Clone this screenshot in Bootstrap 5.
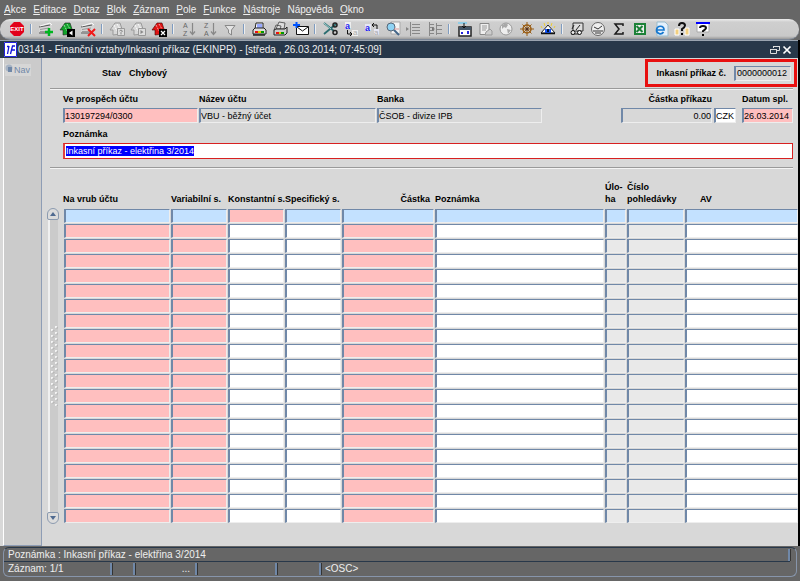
<!DOCTYPE html>
<html lang="cs">
<head>
<meta charset="utf-8">
<meta name="viewport" content="width=device-width, initial-scale=1">
<title>03141 - Finanční vztahy/Inkasní příkaz</title>
<link rel="stylesheet" href="https://cdn.jsdelivr.net/npm/bootstrap@5.3.0/dist/css/bootstrap.min.css">
<style>
body{font:10px/12px "Liberation Sans",Arial,sans-serif;color:#000;background:#666}
.app-menu{height:19px;padding:4px 4px 0;gap:7px}
.app-menu a{color:#f0f0f0;text-decoration:none;white-space:nowrap}
.tools{height:21px;padding:0 6px;margin-right:1px;background:linear-gradient(#ececec,#cfcfcf 3px,#c9c9c9 17px,#999);border-bottom:1px solid #7d8898;border-radius:10px}
.tools button{width:21px;height:20px;padding:0;border:0;background:none;display:flex;align-items:center;justify-content:center}
.tools svg{width:16px;height:16px;display:block}
.split{width:2px;height:10px;margin:0 3px;background:#7f9cc0;border-right:1px solid #eee}
.win{border-right:2px solid #000;background:#d8d8d8}
.win-title{height:18px;background:#28384a;color:#eee;border-top:1px solid #9aa4b0}
.win-title button{border:0;background:none;padding:0;width:12px;height:12px}
.win-title svg{display:block}
.side{width:39px;margin-left:3px;background:#cbcbcb;border-left:1px solid #fff;border-right:1px solid #8e9db5;border-bottom:1px solid #8e9db5;padding:6px 1px}
.side button{border:0;background:#d6d6d6;color:#7088a8;padding:0 1px 0 0;font-size:9px;line-height:12px;white-space:nowrap}
.side svg{display:block}
.pane{min-width:0;padding-left:8px}
.bold,.pane label,.grid-t th{font-size:9px;font-weight:bold;line-height:12px;white-space:nowrap}
.num-box{border:3px solid #e81010;padding:4px 3px 4px 8px;height:28px;gap:8px;margin:1px 1px 1px 0}
.rule{height:2px;background:#9a9a9a;border-bottom:1px solid #f4f4f4;margin-right:5px}
.fld{font-size:9px;line-height:12px;height:15px;width:100%;padding:0 1px;border:1px solid;border-left-width:2px;border-color:#7088a8 #eee #eee #7088a8;background:#d8d8d8;border-radius:0;outline:0;color:#000;display:block}
.pink{background:#ffbfbf}.blue{background:#c3e1ff}.pale{background:#e9e9e9}.white{background:#fff}
.fields{padding:3px 5px 0 13px;gap:1px}
.fields label,.memo label{display:block;margin-bottom:3px}
.fields .fld{padding:0}
.w-acc{width:135px}.w-name{width:177px}.w-bank{width:165px}.w-sum{width:91px}.w-cur{width:22px;margin:0 5px 0 1px}.w-date{width:51px}.w-num{width:57px}
.memo{padding:5px 5px 0 13px}
.memo-in{height:16px;border:1px solid #d82020;border-left:2px solid #e04040;background:#fff;padding:0 1px;display:block;width:100%;font-size:9px;line-height:12px;outline:0}
.memo-in::selection{background:#00f;color:#fff}
.scroller{width:13px;padding-top:39px;margin-right:3px;margin-left:-3px}
.scroller button{width:12px;height:12px;padding:0;border:1px solid #8c9bb0;background:#dcdcdc;display:block}
.scroller svg{display:block;margin:auto}
.s-up{border-radius:6px 6px 2px 2px}.s-dn{border-radius:2px 2px 6px 6px}
.track{width:10px;border-left:2px solid #f0f0f0;margin-left:1px;background:#cbcbcb}
.grid-wrap{padding-top:12px;min-width:0}
.grid-t{table-layout:fixed;width:100%;border-collapse:collapse}
.grid-t th{padding:0 0 4px 1px;height:28px;vertical-align:bottom}
.grid-t th:first-child{padding-left:0}
.grid-t td{padding:0 0 1px 1px;height:15px;vertical-align:top}
.grid-t .fld{height:14px}
.status{margin:1px 3px 4px;border:1px solid #8795ab;border-top-color:#28384a;border-radius:6px;color:#eee}
.status .line{height:14px;padding-left:4px;white-space:nowrap}
.status .line:first-child{border-bottom:1px solid #28384a;margin-right:6px}
.bar{border-right:2px solid #7088a8;box-shadow:1px 0 #333;height:12px}
.s1{width:104px}.s2{width:23px}.s3{width:62px;padding-right:5px}.s4{width:80px}.s5{width:44px}
</style>
<script src="https://cdn.jsdelivr.net/npm/bootstrap@5.3.0/dist/js/bootstrap.bundle.min.js"></script>
</head>
<body class="d-flex flex-column min-vh-100">
<nav class="app-menu d-flex" aria-label="Hlavní menu">
<a href="#"><u>A</u>kce</a><a href="#"><u>E</u>ditace</a><a href="#"><u>D</u>otaz</a><a href="#"><u>B</u>lok</a><a href="#"><u>Z</u>áznam</a><a href="#"><u>P</u>ole</a><a href="#"><u>F</u>unkce</a><a href="#"><u>N</u>ástroje</a><a href="#">Náp<u>o</u>věda</a><a href="#"><u>O</u>kno</a>
</nav>
<svg width="0" height="0" class="position-absolute" aria-hidden="true"><defs>
<g id="doc"><path d="M1 5l11-3 2 2v7l-11 2H1z" fill="#d4d4d4"/><path d="M1 6l11-2M1 12h9" stroke="#555"/><path d="M2 8.500l9-1.500M2 10.500h8" stroke="#999"/><path d="M2 5l10-3 2 2" stroke="#f8f8f8" fill="none"/></g>
<g id="house"><path d="M1 9l5-7h5l2 6v5l-9 1V9z"/><path d="M5 4l3 6M8 3l3 5" stroke="#fff" fill="none" stroke-dasharray="2 1"/></g>
<g id="sort"><path d="M12.500 2v11M10 10.500l2.500 3 2.500-3" stroke="#888" fill="none" stroke-width="1.200"/></g>
</defs></svg>
<div class="tools d-flex align-items-center" role="toolbar" aria-label="Nástroje">
<button aria-label="Konec"><svg viewBox="0 0 16 16"><path d="M5 1h6l4 4v6l-4 4H5l-4-4V5z" fill="#e2001a"/><text x="8" y="10" font-size="6" font-weight="bold" fill="#fff" text-anchor="middle">EXIT</text></svg></button><i class="split"></i>
<button aria-label="Nový záznam"><svg viewBox="0 0 16 16"><use href="#doc"/><path d="M11 7v8M7 11h8" stroke="#00b520" stroke-width="2.500"/></svg></button>
<button aria-label="Předchozí blok"><svg viewBox="0 0 16 16"><use href="#house" fill="#11a32a" stroke="#222" stroke-width=".6"/><path d="M8 8h8v8H8z"/><path d="M13.500 9.500v5L10 12z" fill="#fff"/></svg></button>
<button aria-label="Smazat záznam"><svg viewBox="0 0 16 16"><use href="#doc"/><path d="M8 8l7 7M15 8l-7 7" stroke="#f01818" stroke-width="2"/></svg></button><i class="split"></i>
<button aria-label="Dotaz"><svg viewBox="0 0 16 16"><use href="#house" fill="#d8d8d8" stroke="#999"/><path d="M8.500 7.500h7v7h-7z" fill="#ddd" stroke="#999"/><path d="M10.500 10q1.500-2 3 0l-1.500 1.500v2" fill="none" stroke="#888"/></svg></button>
<button aria-label="Proveď dotaz"><svg viewBox="0 0 16 16"><use href="#house" fill="#d8d8d8" stroke="#999"/><path d="M8.500 7.500h7v7h-7z" fill="#ddd" stroke="#999"/><path d="M10.500 9v4l3-2z" fill="#888"/></svg></button>
<button aria-label="Zruš dotaz"><svg viewBox="0 0 16 16"><use href="#house" fill="#df1414" stroke="#400" stroke-width=".6"/><path d="M8 8h8v8H8z"/><path d="M10 10l4 4M14 10l-4 4" stroke="#fff" stroke-width="1.200"/></svg></button><i class="split"></i>
<button aria-label="Řadit vzestupně"><svg viewBox="0 0 16 16"><text x="3" y="7" font-size="7" fill="#666">A</text><text x="3" y="15" font-size="7" fill="#666">Z</text><use href="#sort"/></svg></button>
<button aria-label="Řadit sestupně"><svg viewBox="0 0 16 16"><text x="3" y="7" font-size="7" fill="#666">Z</text><text x="3" y="15" font-size="7" fill="#666">A</text><use href="#sort"/></svg></button>
<button aria-label="Filtr"><svg viewBox="0 0 16 16"><path d="M3 4.500h10L9.500 9v5l-3-2V9z" fill="#e4e4e4" stroke="#888"/></svg></button><i class="split"></i>
<button aria-label="Tisk"><svg viewBox="0 0 16 16"><path d="M5 2h7v6H4z" fill="#fff" stroke="#222"/><path d="M6 4h5M6 6h5" stroke="#35f"/><path d="M2 9l2-2h9l2 2v4H2z" fill="#ddd" stroke="#222"/><path d="M2 14h12" stroke="#222" stroke-width="1.500"/><path d="M4 11h3" stroke="#e11" stroke-width="2"/><path d="M7 11h3" stroke="#dc0" stroke-width="2"/><path d="M10 11h3" stroke="#090" stroke-width="2"/></svg></button>
<button aria-label="Tisk sestav"><svg viewBox="0 0 16 16"><path d="M7 1l6 1-1 6H4zM4 4l5 1-1 4H2z" fill="#ddd" stroke="#444" stroke-width=".8"/><path d="M2 9l2-1h9l2-2v6l-2 2H2z" fill="#ccc" stroke="#222"/><path d="M4 12h3" stroke="#e11" stroke-width="2"/><path d="M7 12h2" stroke="#dc0" stroke-width="2"/><path d="M9 12h3" stroke="#090" stroke-width="2"/></svg></button>
<button aria-label="Nová zpráva"><svg viewBox="0 0 16 16"><path d="M3.500 5.500h12v8h-12z" fill="#fff" stroke="#111"/><path d="M4 6l5.500 4L15 6" fill="none" stroke="#111"/><path d="M3.500 1v6M0 4h7" stroke="#05f" stroke-width="2"/></svg></button><i class="split"></i>
<button aria-label="Vyjmout"><svg viewBox="0 0 16 16"><path d="M2 2l10 8M2 13L14 3" stroke="#2b6d70" stroke-width="1.800"/><path d="M2 2l7 6" stroke="#dff" stroke-width=".7"/><circle cx="13" cy="4" r="2" fill="none" stroke="#222" stroke-width="1.500"/><circle cx="13" cy="11.500" r="2" fill="none" stroke="#222" stroke-width="1.500"/></svg></button>
<button aria-label="Kopírovat"><svg viewBox="0 0 16 16"><path d="M2 1h6v7H2zM9 9h6v6H9z" fill="#eee"/><text x="2" y="8" font-size="9" font-weight="bold" fill="#22e">a</text><text x="10" y="14" font-size="8" fill="#aaa">a</text><path d="M4.500 9v4H9M7 11l2 2-2 2" fill="none" stroke="#111"/></svg></button>
<button aria-label="Vložit"><svg viewBox="0 0 16 16"><path d="M1 3h6v7H1zM10 8h5v6h-5z" fill="#e6e6f4"/><text x="1" y="10" font-size="9" font-weight="bold" fill="#22e">a</text><text x="10" y="14" font-size="8" fill="#aaa">a</text><path d="M8 4h5v4M10 2L8 4l2 2" fill="none" stroke="#111"/></svg></button>
<button aria-label="Hledat"><svg viewBox="0 0 16 16"><path d="M6 1h9v12H6z" fill="#f4f4f4" stroke="#aaa"/><circle cx="6" cy="6" r="4" fill="#8fd3f4" stroke="#567"/><path d="M9 9l5 5" stroke="#468" stroke-width="2"/><path d="M9 8h5" stroke="#d99"/></svg></button>
<button aria-label="Odsadit"><svg viewBox="0 0 16 16"><path d="M4.500 1v14M6 3.500h8M6 6.500h8M6 9.500h8M6 12.500h8" stroke="#888"/><path d="M0 6l3 2-3 2z" fill="#888"/></svg></button>
<button aria-label="Strom"><svg viewBox="0 0 16 16"><path d="M2.500 1v14M2 3.500h5M2 6.500h5M2 9.500h5M2 12.500h5M9.500 2v12M10 4.500h5M10 8.500h5M10 12.500h5" stroke="#888"/><path d="M5 6l3 2-3 2z" fill="#777"/></svg></button><i class="split"></i>
<button aria-label="Kalendář"><svg viewBox="0 0 16 16"><path d="M2 2h9" stroke="#5cf"/><path d="M3 6h12v9H3z" fill="#fff" stroke="#222" stroke-width="1.500"/><path d="M3 6h12v3H3z" fill="#456"/><path d="M8 2v5M6 5l2 2 2-2" stroke="#111" fill="none"/><path d="M5 11h2v2H5zM11 10h2v3h-2z" fill="#22d"/></svg></button>
<button aria-label="Dokument"><svg viewBox="0 0 16 16"><path d="M3 2.500h9v11H3z" fill="#eee" stroke="#888"/><path d="M5 5h5M5 7h5M5 9h4M9 11l4-3 2 2v4H8z" stroke="#999" fill="#ccc"/></svg></button>
<button aria-label="Web"><svg viewBox="0 0 16 16"><circle cx="8" cy="8" r="6" fill="#eee" stroke="#999"/><path d="M4 4l4-2 2 2-2 3-2-1-2 2zM9 8l4 1-3 4z" fill="#a8a8a8"/></svg></button>
<button aria-label="Navigace"><svg viewBox="0 0 16 16"><g fill="none" stroke="#995c12"><circle cx="8" cy="8" r="4" stroke-width="1.500"/><path d="M8 1v14M1 8h14M3.500 3.500l9 9M12.500 3.500l-9 9" stroke-width="1"/></g><circle cx="8" cy="8" r="1.500" fill="#532"/></svg></button>
<button aria-label="Zobrazit"><svg viewBox="0 0 16 16"><path d="M2 7L1 5M5 5L4 2M8 3V1M11 5l1-3M14 7l1-2" stroke="#ec3"/><path d="M8 4l7 8H1z" fill="#fff" stroke="#222"/><path d="M5 8h6v4H5z" fill="#15f"/><path d="M1 12.500h14" stroke="#111" stroke-width="1.500"/><path d="M7 8h2v3H7z" fill="#013"/></svg></button><i class="split"></i>
<button aria-label="Doprava"><svg viewBox="0 0 16 16"><path d="M4 2h10v8H4z" fill="#ddd" stroke="#333"/><path d="M3 8l2-4M7 9l4-5M2 13h9" stroke="#222"/><circle cx="4" cy="11.500" r="2" fill="#eee" stroke="#111"/><circle cx="10.500" cy="11.500" r="2" fill="#eee" stroke="#111"/></svg></button>
<button aria-label="Čas"><svg viewBox="0 0 16 16"><circle cx="8" cy="8" r="6.500" fill="#eee" stroke="#666"/><path d="M4 6l4 2 4-3M3 10h10M5 12h6" stroke="#333" fill="none"/></svg></button>
<button aria-label="Součet"><svg viewBox="0 0 16 16"><path d="M12 5V3H4l4 5-4 5h8v-2" fill="none" stroke="#1b1b1b" stroke-width="1.500"/></svg></button>
<button aria-label="Excel"><svg viewBox="0 0 16 16"><path d="M2 2h12v12H2z" fill="#1c8138"/><path d="M4 4h8v8H4z" fill="#eee"/><path d="M4.500 5l6 6M10.500 5l-6 6" stroke="#1c8138" stroke-width="2"/></svg></button>
<button aria-label="Internet"><svg viewBox="0 0 16 16"><path d="M4 1h8l3 3v11H4z" fill="#e4f0fb" stroke="#9bc"/><path d="M3 9h8c0-5-7-5-7.500 0 0 4 5 5 7 2" fill="none" stroke="#1678cf" stroke-width="1.700"/></svg></button>
<button aria-label="Nápověda k poli"><svg viewBox="0 0 16 16"><path d="M1 8h4v6H1zM11 7h4v7h-4z" fill="#f2cf80" stroke="#fff"/><path d="M5 5q0-3 3-3t3 2.500Q11 6 8 8v2" fill="none" stroke="#111" stroke-width="2"/><path d="M7 12h2v2H7z"/></svg></button>
<button aria-label="Nápověda"><svg viewBox="0 0 16 16"><path d="M2 2h12v9H2z" fill="#fff" stroke="#aaa"/><path d="M1 2h14" stroke="#00f" stroke-width="2"/><path d="M5 7q0-2 3-2t3 2q0 1-3 3v1" fill="none" stroke="#111" stroke-width="2"/><path d="M7 13h2v2H7z"/></svg></button>
</div>
<main class="win d-flex flex-column flex-grow-1">
<header class="win-title d-flex align-items-center">
<svg class="ms-1 flex-shrink-0" width="14" height="15" viewBox="0 0 14 15" aria-hidden="true"><path d="M0 0h13v15H0z" fill="#fff"/><path d="M.5.500h12v14H.5z" fill="none" stroke="#22d"/><path d="M3 4.500h2M5 4L3.500 12M6.500 12l2-8H11M8 8h3" stroke="#11d" stroke-width="1.300" fill="none"/></svg>
<span class="text-nowrap">03141 - Finanční vztahy/Inkasní příkaz (EKINPR) - [středa , 26.03.2014; 07:45:09]</span>
<button class="ms-auto" aria-label="Obnovit"><svg width="10" height="10" viewBox="0 0 10 10" fill="none" stroke="#ddd"><path d="M3.500 3V1.500h6v4H7M3 1.500h7"/><path d="M.5 4.500h6v4h-6zM0 4.500h7"/></svg></button>
<button class="me-1" aria-label="Zavřít"><svg width="10" height="10" viewBox="0 0 10 10"><path d="M1.500 1.500l7 7M8.500 1.500l-7 7" stroke="#fff" stroke-width="1.700"/></svg></button>
</header>
<div class="d-flex flex-grow-1">
<aside class="side flex-shrink-0"><button class="d-flex"><svg width="9" height="9" viewBox="0 0 9 9" aria-hidden="true"><circle cx="4" cy="4" r="3.500" fill="#a8b4c4"/><path d="M3 3h4v5H3z" fill="#7088a8"/></svg><span>Nav</span></button></aside>
<section class="pane flex-grow-1 d-flex flex-column">
<div class="d-flex align-items-center">
<span class="bold ms-5 ps-1">Stav</span><span class="bold ms-2">Chybový</span>
<div class="num-box d-flex align-items-center ms-auto"><label for="num">Inkasní příkaz č.</label><input id="num" class="fld w-num" value="0000000012" readonly></div>
</div>
<div class="rule"></div>
<div class="fields d-flex">
<div class="w-acc"><label for="acc">Ve prospěch účtu</label><input id="acc" class="fld pink" value="130197294/0300"></div>
<div class="w-name"><label for="nm">Název účtu</label><input id="nm" class="fld" value="VBU - běžný účet"></div>
<div class="w-bank"><label for="bank">Banka</label><input id="bank" class="fld" value="ČSOB - divize IPB"></div>
<div class="w-sum ms-auto text-end"><label for="sum">Částka příkazu</label><input id="sum" class="fld text-end" value="0.00"></div>
<div class="w-cur d-flex align-items-end"><input class="fld white" aria-label="Měna" value="CZK"></div>
<div class="w-date"><label for="dt">Datum spl.</label><input id="dt" class="fld pink" value="26.03.2014"></div>
</div>
<div class="memo"><label for="memo">Poznámka</label><input id="memo" class="memo-in" value="Inkasní příkaz - elektřina 3/2014"></div>
<div class="rule mt-2"></div>
<div class="d-flex">
<div class="scroller d-flex flex-column flex-shrink-0">
<button class="s-up" aria-label="Nahoru"><svg width="8" height="8" viewBox="0 0 8 8"><path d="M4 2l3 4H1z" fill="#4f6a90"/></svg></button>
<div class="track flex-grow-1 d-flex align-items-center"><svg width="8" height="80" viewBox="0 0 8 80" aria-hidden="true"><defs><pattern id="dots" width="8" height="6" patternUnits="userSpaceOnUse"><path d="M1 3h2v2H1zM5 0h2v2H5z" fill="#f4f4f4"/><path d="M2 5h2V4M6 2h2V1" stroke="#aaa" fill="none" stroke-width=".7"/></pattern></defs><path d="M0 0h8v80H0z" fill="url(#dots)"/></svg></div>
<button class="s-dn" aria-label="Dolů"><svg width="8" height="8" viewBox="0 0 8 8"><path d="M4 6l3-4H1z" fill="#4f6a90"/></svg></button>
</div>
<div class="grid-wrap flex-grow-1">
<table class="grid-t">
<colgroup><col width="107"><col width="57"><col width="57"><col width="57"><col width="93"><col width="170"><col width="22"><col width="58"><col></colgroup>
<thead><tr><th>Na vrub účtu</th><th>Variabilní s.</th><th>Konstantní s.</th><th>Specifický s.</th><th class="text-end pe-1">Částka</th><th>Poznámka</th><th>Úlo-<br>ha</th><th>Číslo<br>pohledávky</th><th class="ps-3">AV</th></tr></thead>
<tbody id="rows"></tbody>
</table></div>
</div>
</section>
</div>
</main>
<footer class="status">
<div class="line d-flex align-items-center"><span>Poznámka : Inkasní příkaz - elektřina 3/2014</span><i class="bar ms-auto"></i></div>
<div class="line d-flex align-items-center"><span class="bar s1">Záznam: 1/1</span><span class="bar s2"></span><span class="bar s3 text-end">...</span><span class="bar s4"></span><span class="bar s5"></span><span class="ps-1">&lt;OSC&gt;</span></div>
</footer>
<script>
const names=["Na vrub účtu","Variabilní s.","Konstantní s.","Specifický s.","Částka","Poznámka","Úloha","Číslo pohledávky","AV"];
const active=["blue","blue","pink","blue","blue","blue","blue","blue","blue"];
const idle=["pink","pink","white","white","pink","white","pale","pale","white"];
let html="";
for(let r=0;r<21;r++){
  const tone=r?idle:active;
  html+="<tr>"+names.map((n,c)=>`<td><input class="fld ${tone[c]}" aria-label="${n} ${r+1}"></td>`).join("")+"</tr>";
}
document.getElementById("rows").innerHTML=html;
const memo=document.getElementById("memo");
memo.focus();memo.select();
</script>
</body>
</html>
